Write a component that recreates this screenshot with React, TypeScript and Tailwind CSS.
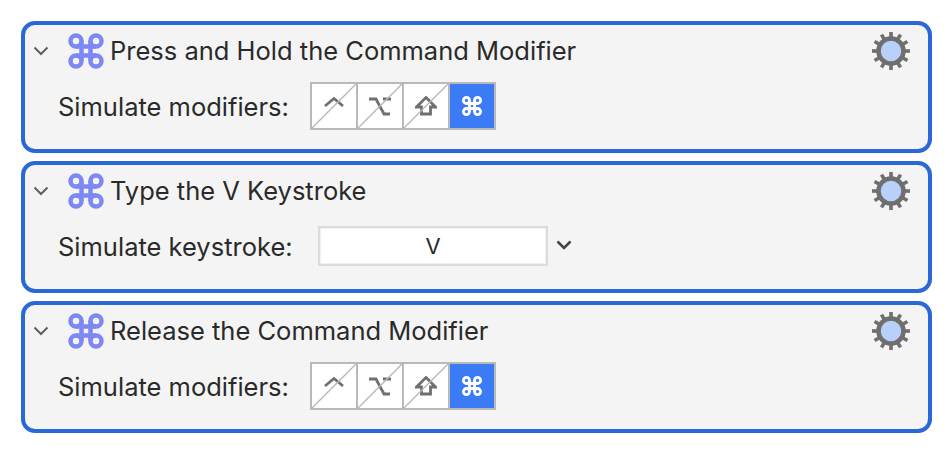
import React from 'react';

const CommandIcon: React.FC<{ className?: string; strokeWidth?: number }> = ({ className, strokeWidth = 4.5 }) => (
  <svg viewBox="0 0 36 36" className={className} fill="none" stroke="currentColor" strokeWidth={strokeWidth}>
    <circle cx="8" cy="8" r="5.5" />
    <circle cx="28" cy="8" r="5.5" />
    <circle cx="8" cy="28" r="5.5" />
    <circle cx="28" cy="28" r="5.5" />
    <path d="M13.5 8V28M22.5 8V28M8 13.5H28M8 22.5H28" />
  </svg>
);

const Chevron: React.FC = () => (
  <svg viewBox="0 0 16 10" className="h-[10px] w-[16px] text-[#5f5f5f]" fill="none" stroke="currentColor" strokeWidth="2">
    <path d="M1.5 1.5 8 8l6.5-6.5" />
  </svg>
);

const Gear: React.FC = () => {
  const teeth = [0, 30, 60, 90, 120, 150, 180, 210, 240, 270, 300, 330];
  return (
    <svg viewBox="0 0 38 38" className="h-[38px] w-[38px]">
      {teeth.map((a) => (
        <rect key={a} x="17.2" y="0" width="3.6" height="8" fill="#6f6f6f" transform={`rotate(${a} 19 19)`} />
      ))}
      <circle cx="19" cy="19" r="12.5" fill="#b9d0fb" stroke="#6f6f6f" strokeWidth="4.5" />
    </svg>
  );
};

const Slash: React.FC = () => (
  <svg viewBox="0 0 43 43" preserveAspectRatio="none" className="absolute inset-0 h-full w-full text-[#b9b9b9]" fill="none" stroke="currentColor" strokeWidth="1.4">
    <path d="M0 43 43 0" />
  </svg>
);

const keyIcons = [
  <path key="ctrl" d="M2 10 11 2.5l9 7.5" />,
  <path key="opt" d="M0 3h7l8 15h6M14 3h8" />,
  <path key="shift" d="M11 1.5 1.5 11h5v7h9v-7h5Z" />,
];

const ModifierRow: React.FC = () => (
  <div className="flex items-center pl-[33px] pt-[12px]">
    <span className="mt-[2px] w-[252px] text-[25.5px] leading-[30px] text-[#2a2a2a]">Simulate modifiers:</span>
    <div className="flex h-[48px] border-2 border-[#b9b9b9] bg-white">
      {keyIcons.map((icon, i) => (
        <div key={i} className="relative flex w-[46px] items-center justify-center border-r-2 border-[#b9b9b9]">
          <svg viewBox="0 0 22 20" className="h-[20px] w-[22px] text-[#707070]" fill="none" stroke="currentColor" strokeWidth="2.8">
            {icon}
          </svg>
          <Slash />
        </div>
      ))}
      <div className="flex w-[44px] items-center justify-center bg-[#3b7cf6] text-white">
        <CommandIcon className="h-[20px] w-[20px]" strokeWidth={5} />
      </div>
    </div>
  </div>
);

const KeystrokeRow: React.FC = () => (
  <div className="flex items-center pl-[33px] pt-[16px]">
    <span className="mt-[2px] w-[260px] text-[25.5px] leading-[30px] text-[#2a2a2a]">Simulate keystroke:</span>
    <div className="flex h-[40px] w-[230px] items-center justify-center border-2 border-[#dcdcdc] bg-white text-[22px] text-[#2a2a2a] shadow-[inset_0_0_0_1px_#f0f0f0]">
      V
    </div>
    <div className="-mt-[3px] ml-[8px] text-[#454545]">
      <svg viewBox="0 0 16 10" className="h-[10px] w-[16px]" fill="none" stroke="currentColor" strokeWidth="2.6">
        <path d="M1.5 1.5 8 8l6.5-6.5" />
      </svg>
    </div>
  </div>
);

const ActionCard: React.FC<{ title: string; children: React.ReactNode }> = ({ title, children }) => (
  <div className="h-[132px] rounded-[14px] border-4 border-[#2a68d8] bg-[#f4f4f4]">
    <div className="flex items-center pl-[8px] pr-[18px] pt-[7px]">
      <Chevron />
      <CommandIcon className="ml-[19px] h-[36px] w-[36px] text-[#7e88f4]" />
      <span className="ml-[6px] flex-1 text-[25.5px] leading-[36px] text-[#2a2a2a]">{title}</span>
      <Gear />
    </div>
    {children}
  </div>
);

export default function App() {
  return (
    <div className="flex h-[454px] w-[952px] flex-col gap-[8px] bg-white pl-[21px] pr-[20px] pt-[21px] font-['Inter',sans-serif]">
      <ActionCard title="Press and Hold the Command Modifier">
        <ModifierRow />
      </ActionCard>
      <ActionCard title="Type the V Keystroke">
        <KeystrokeRow />
      </ActionCard>
      <ActionCard title="Release the Command Modifier">
        <ModifierRow />
      </ActionCard>
    </div>
  );
}
